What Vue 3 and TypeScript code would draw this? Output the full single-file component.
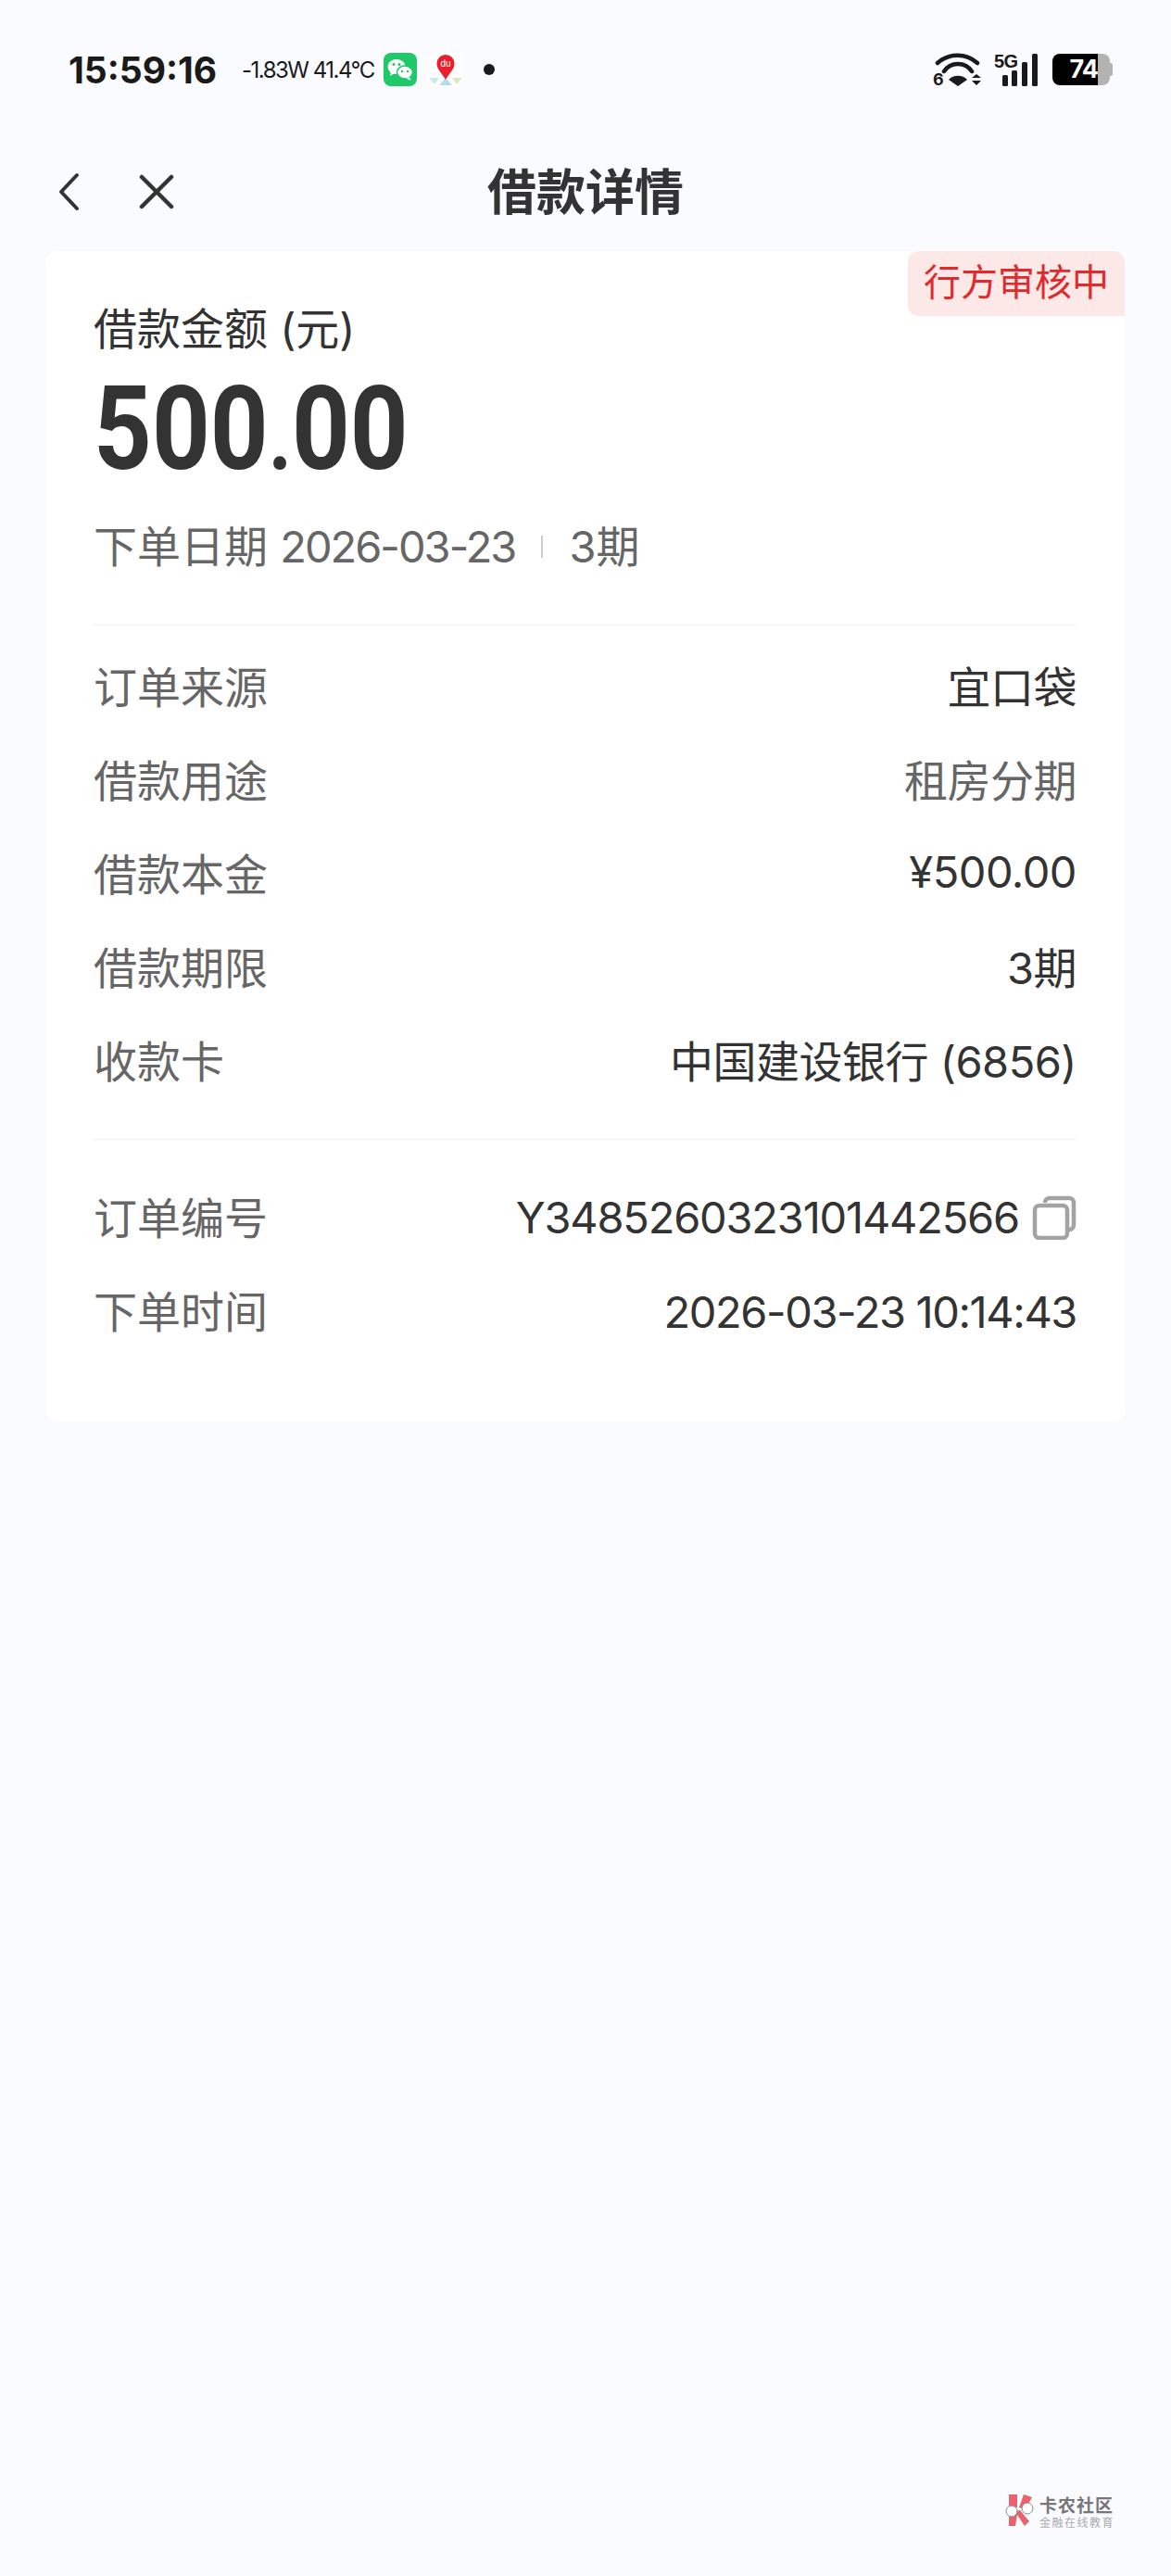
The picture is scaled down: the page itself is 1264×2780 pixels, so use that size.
<script setup lang="ts">
interface Row {
  label: string
  value: string
  muted?: boolean
}

const orderRows: Row[] = [
  { label: '订单来源', value: '宜口袋' },
  { label: '借款用途', value: '租房分期', muted: true },
  { label: '借款本金', value: '¥500.00' },
  { label: '借款期限', value: '3期' },
  { label: '收款卡', value: '中国建设银行 (6856)' }
]

const signalBars = [
  { x: 9, y: 23, h: 12 },
  { x: 19, y: 18, h: 17 },
  { x: 30, y: 9, h: 26 },
  { x: 41, y: 0, h: 35 }
]
</script>

<template>
  <div class="page">
    <!-- 状态栏 -->
    <div class="status-bar">
      <div class="status-left">
        <span class="time">15:59:16</span>
        <span class="power">-1.83W 41.4°C</span>
        <svg class="app-icon" viewBox="0 0 36 36">
          <rect width="36" height="36" rx="8" fill="#1fc968" />
          <ellipse cx="14" cy="15" rx="9.500" ry="8" fill="#fff" />
          <path d="M8 20l-1 5 5-3z" fill="#fff" />
          <ellipse cx="23" cy="21" rx="8.500" ry="7" fill="#fff" stroke="#1fc968" stroke-width="1.500" />
          <path d="M28 26l1.500 4-5-2.500z" fill="#fff" />
          <circle cx="11" cy="12.500" r="1.500" fill="#1fc968" />
          <circle cx="17" cy="12.500" r="1.500" fill="#1fc968" />
          <circle cx="20" cy="20" r="1.200" fill="#1fc968" />
          <circle cx="26" cy="20" r="1.200" fill="#1fc968" />
        </svg>
        <svg class="app-icon map-icon" viewBox="0 0 38 37">
          <rect width="38" height="37" rx="8" fill="#fff" />
          <path d="M1 27h11l-5 7z" fill="#c9e8f6" />
          <path d="M12 35l7-8 7 8z" fill="#b5dcf2" />
          <path d="M26 27h11l-6 7z" fill="#d5ebb8" />
          <path d="M19 29C15 22 9.500 18 9.500 11.500a9.500 9.500 0 0 1 19 0C28.500 18 23 22 19 29z" fill="#e8202e" />
          <text x="19" y="14.500" class="du">du</text>
        </svg>
        <span class="dot"></span>
      </div>
      <div class="status-right">
        <div class="wifi-wrap">
          <svg class="wifi" viewBox="0 0 52 36">
            <path d="M5 11A32 32 0 0 1 48 11" fill="none" stroke="#1a1a1a" stroke-width="4.500" stroke-linecap="round" />
            <path d="M12 20A18 18 0 0 1 42 20" fill="none" stroke="#1a1a1a" stroke-width="4.500" stroke-linecap="round" />
            <path d="M17 29A14 14 0 0 1 37 29L27 36z" fill="#1a1a1a" />
            <path d="M42 27l5-4 5 4zM42 30h10l-5 5z" fill="#1a1a1a" />
          </svg>
          <span class="wifi-six">6</span>
        </div>
        <div class="signal">
          <span class="five-g">5G</span>
          <svg class="bars" viewBox="0 0 47 35">
            <rect v-for="bar in signalBars" :key="bar.x" :x="bar.x" :y="bar.y" width="6" :height="bar.h" rx="1.500" fill="#1a1a1a" />
          </svg>
        </div>
        <div class="battery">
          <span class="battery-level">74</span>
          <span class="battery-rest"></span>
          <span class="battery-cap"></span>
        </div>
      </div>
    </div>

    <!-- 导航栏 -->
    <div class="nav-bar">
      <div class="nav-actions">
        <svg class="nav-back" viewBox="0 0 24 42">
          <path d="M21 3L4 21l17 18" fill="none" stroke="#333" stroke-width="4" stroke-linecap="round" stroke-linejoin="round" />
        </svg>
        <svg class="nav-close" viewBox="0 0 38 38">
          <path d="M3 3l32 32M35 3L3 35" fill="none" stroke="#333" stroke-width="4.500" stroke-linecap="round" />
        </svg>
      </div>
      <div class="nav-title">借款详情</div>
      <div></div>
    </div>

    <!-- 详情卡片 -->
    <div class="card">
      <div class="badge">行方审核中</div>
      <div class="amount-label">借款金额 (元)</div>
      <div class="amount">500<span class="amount-dot">.</span>00</div>
      <div class="date-line">
        <span>下单日期 <span class="date-digits">2026-03-23</span></span>
        <span class="date-sep"></span>
        <span>3期</span>
      </div>
      <div class="divider"></div>
      <div class="rows">
        <div v-for="row in orderRows" :key="row.label" class="row">
          <span class="row-label">{{ row.label }}</span>
          <span class="row-value" :class="{ muted: row.muted }">{{ row.value }}</span>
        </div>
      </div>
      <div class="divider second"></div>
      <div class="rows order-info">
        <div class="row">
          <span class="row-label">订单编号</span>
          <span class="row-value with-icon">
            <span class="order-no">Y3485260323101442566</span>
            <svg class="copy-icon" viewBox="0 0 48 48">
              <path d="M14 8a5 5 0 0 1 5-5h21a5 5 0 0 1 5 5v24a5 5 0 0 1-5 5" fill="none" stroke="#a3a3a3" stroke-width="4.500" />
              <rect x="3" y="11" width="35" height="35" rx="5" fill="#fff" stroke="#a3a3a3" stroke-width="4.500" />
            </svg>
          </span>
        </div>
        <div class="row">
          <span class="row-label">下单时间</span>
          <span class="row-value order-time">2026-03-23 10:14:43</span>
        </div>
      </div>
    </div>

    <!-- 水印 -->
    <div class="watermark">
      <svg class="watermark-logo" viewBox="0 0 32 34">
        <path d="M4 0h9v14h-9zM15 14L20 0l9 3-7 13zM16 17l10 12-5 5-8-12-2 12H4V20z" fill="#e9636f" />
        <circle cx="7" cy="18" r="6" fill="#fff" stroke="#8a8a8a" stroke-width="1" />
        <circle cx="24" cy="15" r="6" fill="#fff" stroke="#8a8a8a" stroke-width="1" />
      </svg>
      <div class="watermark-text">
        <div class="watermark-name">卡农社区</div>
        <div class="watermark-sub">金融在线教育</div>
      </div>
    </div>
  </div>
</template>

<style scoped>
.page {
  position: relative;
  min-height: 2780px;
  background-color: #fafbff;
  font-family: Inter, "Noto Sans CJK SC", sans-serif;
  overflow: hidden;
}

.status-bar {
  height: 150px;
  padding: 0 63px 0 74px;
  box-sizing: border-box;
  display: flex;
  align-items: center;
  justify-content: space-between;
  color: #1a1a1a;
}

.status-left,
.status-right {
  display: flex;
  align-items: center;
}

.time {
  font-size: 39px;
  font-weight: 700;
  width: 187px;
  white-space: nowrap;
}

.power {
  font-size: 24px;
  letter-spacing: -1.500px;
  width: 153px;
  white-space: nowrap;
}

.app-icon {
  width: 36px;
  height: 36px;
  flex-shrink: 0;
}

.map-icon {
  width: 38px;
  height: 37px;
  margin-left: 12px;
}

.du {
  font-family: "Liberation Sans", sans-serif;
  font-size: 10px;
  fill: #fff;
  text-anchor: middle;
}

.dot {
  width: 12px;
  height: 12px;
  border-radius: 50%;
  background-color: #1a1a1a;
  margin-left: 22px;
}

.wifi-wrap {
  position: relative;
  width: 52px;
  height: 36px;
}

.wifi {
  display: block;
  width: 52px;
  height: 36px;
}

.wifi-six {
  position: absolute;
  left: 0;
  bottom: 0;
  font-size: 18px;
  line-height: 14px;
  font-weight: 700;
}

.signal {
  position: relative;
  width: 47px;
  height: 35px;
  margin-left: 14px;
}

.five-g {
  position: absolute;
  left: 0;
  top: -2px;
  font-family: "Liberation Sans", sans-serif;
  font-size: 20px;
  line-height: 20px;
  font-weight: 700;
  letter-spacing: -0.5px;
}

.bars {
  display: block;
  width: 47px;
  height: 35px;
}

.battery {
  position: relative;
  display: flex;
  margin-left: 16px;
  height: 34px;
  width: 65px;
}

.battery-level {
  width: 49px;
  background-color: #000;
  color: #fff;
  border-radius: 8px 0 0 8px;
  font-size: 27px;
  font-weight: 700;
  line-height: 34px;
  text-align: right;
  letter-spacing: -1px;
  box-sizing: border-box;
}

.battery-rest {
  width: 13px;
  background-color: #b3b3b3;
  border-radius: 0 8px 8px 0;
}

.battery-cap {
  width: 3px;
  height: 14px;
  margin-top: 10px;
  background-color: #b3b3b3;
  border-radius: 0 2px 2px 0;
}

.nav-bar {
  height: 64px;
  margin: 25px 0 32px;
  padding: 0 62px;
  display: grid;
  grid-template-columns: 1fr auto 1fr;
  align-items: center;
}

.nav-actions {
  display: flex;
  align-items: center;
  gap: 64px;
}

.nav-back {
  width: 24px;
  height: 42px;
}

.nav-close {
  width: 38px;
  height: 38px;
}

.nav-title {
  font-size: 53px;
  font-weight: 700;
  line-height: 62px;
  padding-top: 2px;
  color: #333;
}

.card {
  position: relative;
  margin: 0 50px;
  padding: 54px 52px 68px 51px;
  background-color: #fff;
  border-radius: 12px;
}

.badge {
  position: absolute;
  top: 0;
  right: 0;
  width: 234px;
  height: 70px;
  line-height: 68px;
  text-align: center;
  font-size: 40px;
  color: #e02a2e;
  background-color: #fde8e8;
  border-radius: 12px 12px 0 12px;
}

.amount-label {
  font-size: 47px;
  line-height: 60px;
  color: #333;
}

.amount {
  margin-top: 13px;
  height: 130px;
  font-family: Roboto, sans-serif;
  font-size: 126px;
  font-weight: 700;
  line-height: 130px;
  color: #333;
  transform: scaleX(0.87);
  transform-origin: left center;
}

.amount-dot {
  font-size: 100px;
  line-height: 0;
}

.date-line {
  margin-top: 32px;
  display: flex;
  align-items: center;
  font-size: 47px;
  line-height: 60px;
  color: #666;
}

.date-digits {
  letter-spacing: -2px;
}

.date-sep {
  width: 2px;
  height: 24px;
  margin: 0 28px;
  background-color: #ccc;
}

.divider {
  height: 1px;
  margin-top: 54px;
  background-color: #f0f0f0;
}

.divider.second {
  margin-top: 33px;
}

.rows {
  margin-top: 16px;
}

.rows.order-info {
  margin-top: 34px;
}

.row {
  display: flex;
  align-items: center;
  justify-content: space-between;
  height: 101px;
  box-sizing: border-box;
  padding-bottom: 6px;
  font-size: 47px;
}

.row-label {
  color: #666;
}

.row-value {
  color: #333;
  letter-spacing: -0.5px;
}

.row-value.muted {
  color: #666;
}

.row-value.order-time {
  padding-top: 5px;
  letter-spacing: -1.400px;
}

.order-no {
  letter-spacing: -1.200px;
}

.with-icon {
  display: flex;
  align-items: center;
  gap: 14px;
  padding-top: 4px;
}

.copy-icon {
  width: 48px;
  height: 48px;
}

.watermark {
  position: absolute;
  left: 1085px;
  top: 2692px;
  display: flex;
  gap: 5px;
}

.watermark-logo {
  width: 32px;
  height: 34px;
}

.watermark-name {
  font-size: 19px;
  line-height: 21px;
  font-weight: 700;
  color: #777;
  letter-spacing: 1px;
  margin-top: 2px;
}

.watermark-sub {
  font-size: 12px;
  line-height: 14px;
  color: #aaa;
  letter-spacing: 1.500px;
  margin-top: 1px;
}
</style>

<style>
html,
body {
  background-color: #fafbff;
}
</style>
